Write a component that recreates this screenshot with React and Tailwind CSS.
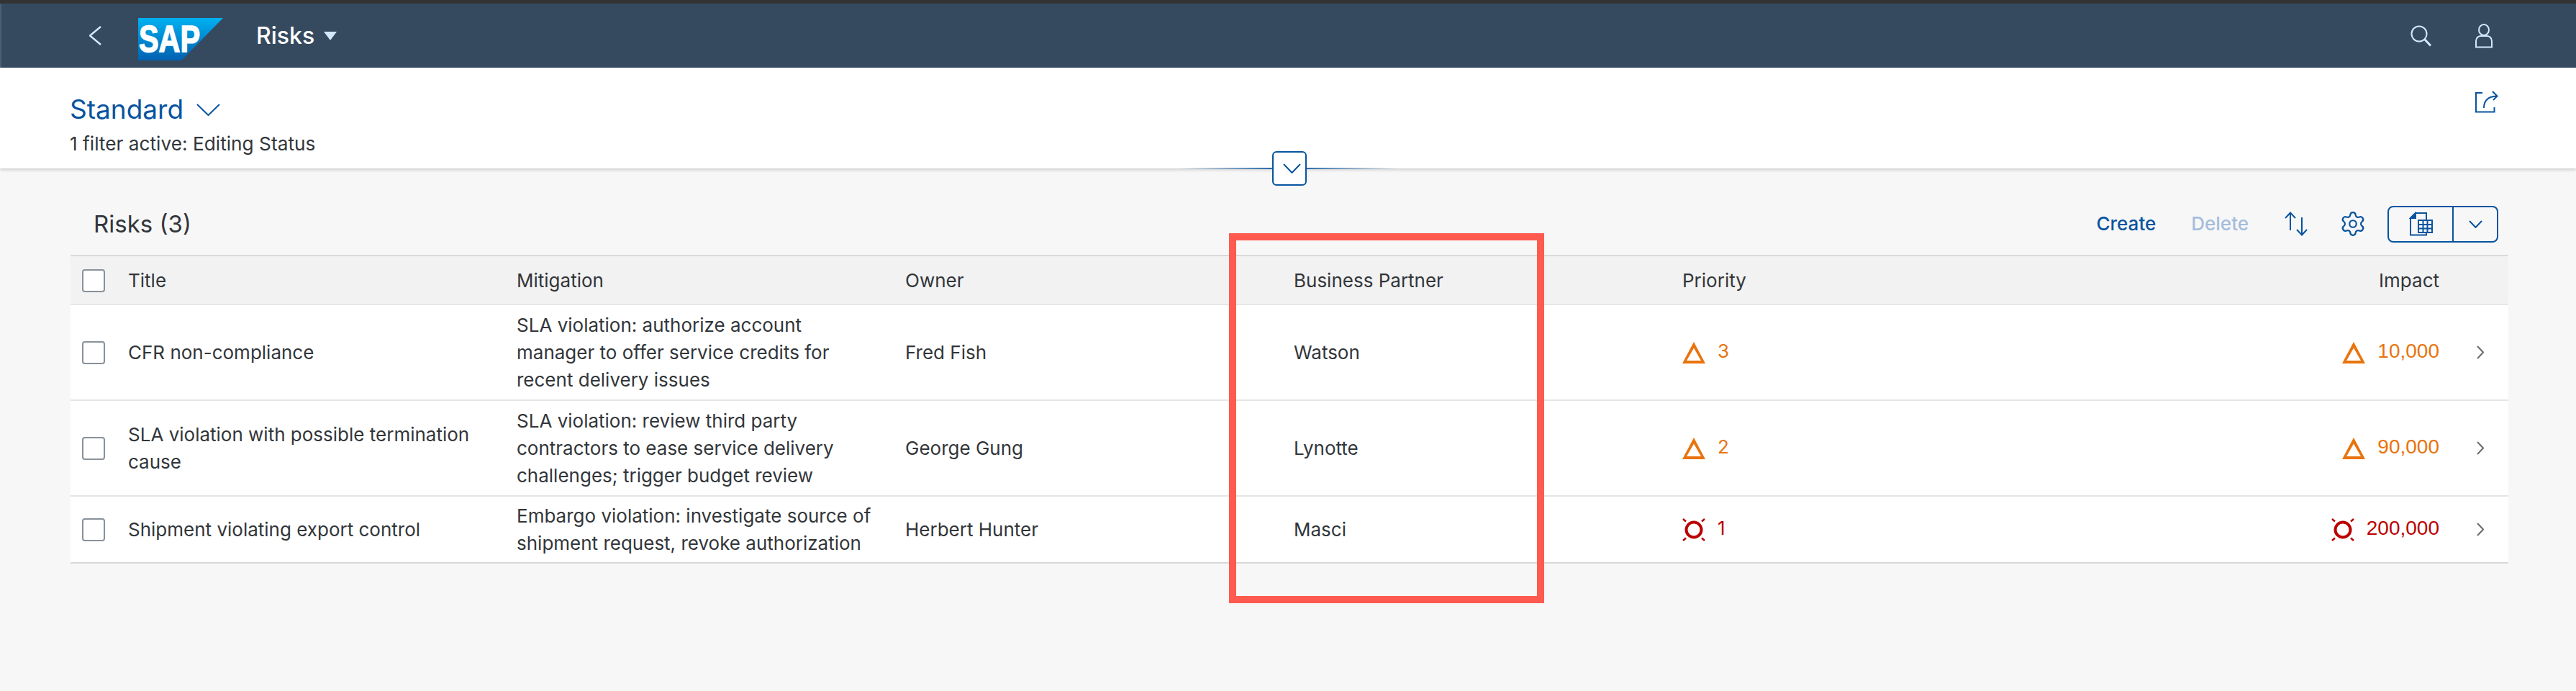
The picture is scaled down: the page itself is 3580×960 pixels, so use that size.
import { Settings } from 'lucide-react';

const rows = [
  {
    title: 'CFR non-compliance',
    mitigation: 'SLA violation: authorize account manager to offer service credits for recent delivery issues',
    owner: 'Fred Fish',
    partner: 'Watson',
    priority: '3',
    impact: '10,000',
    level: 'warning',
    height: 'h-[133px]',
    line: 'border-[#e5e5e5]',
  },
  {
    title: 'SLA violation with possible termination cause',
    mitigation: 'SLA violation: review third party contractors to ease service delivery challenges; trigger budget review',
    owner: 'George Gung',
    partner: 'Lynotte',
    priority: '2',
    impact: '90,000',
    level: 'warning',
    height: 'h-[133px]',
    line: 'border-[#e5e5e5]',
  },
  {
    title: 'Shipment violating export control',
    mitigation: 'Embargo violation: investigate source of shipment request, revoke authorization',
    owner: 'Herbert Hunter',
    partner: 'Masci',
    priority: '1',
    impact: '200,000',
    level: 'error',
    height: 'h-[93px]',
    line: 'border-[#d9d9d9]',
  },
];

const columns = 'grid grid-cols-[80px_540px_540px_540px_540px_526px_1fr_96px] items-center';

function Chevron({ width, height, color, stroke = 2, dir = 'down' }) {
  const points =
    dir === 'down'
      ? `1,1 ${width / 2},${height - 1} ${width - 1},1`
      : dir === 'left'
        ? `${width - 1},1 1,${height / 2} ${width - 1},${height - 1}`
        : `1,1 ${width - 1},${height / 2} 1,${height - 1}`;
  return (
    <svg width={width} height={height} viewBox={`0 0 ${width} ${height}`} fill="none" stroke={color} strokeWidth={stroke} className="shrink-0">
      <polyline points={points} />
    </svg>
  );
}

function SapLogo() {
  return (
    <svg width="118" height="59" viewBox="0 0 118 59" className="shrink-0">
      <defs>
        <linearGradient id="sapBlue" x1="0" y1="0" x2="0" y2="1">
          <stop offset="0" stopColor="#00b1f1" />
          <stop offset="1" stopColor="#0061b1" />
        </linearGradient>
      </defs>
      <polygon points="0,0 118,0 60,59 0,59" fill="url(#sapBlue)" />
      <text
        x="1"
        y="47"
        fill="#fff"
        stroke="#fff"
        strokeWidth="1.6"
        fontFamily="Liberation Sans"
        fontWeight="700"
        fontSize="52"
        textLength="85"
        lengthAdjust="spacingAndGlyphs"
      >
        SAP
      </text>
    </svg>
  );
}

function SearchIcon() {
  return (
    <svg width="30" height="30" viewBox="0 0 30 30" fill="none" stroke="#d1e8ff" strokeWidth="2">
      <circle cx="12" cy="12" r="10.5" />
      <path d="M19.5 19.5 L28 28.5" strokeWidth="3" />
    </svg>
  );
}

function UserIcon() {
  return (
    <svg width="26" height="34" viewBox="0 0 26 34" fill="none" stroke="#d1e8ff" strokeWidth="2">
      <ellipse cx="13" cy="8.5" rx="7" ry="7.5" />
      <path d="M2 32.5 V24 C2 19 6 17 9 17 H17 C20 17 24 19 24 24 V32.5 Z" />
    </svg>
  );
}

function ShareIcon() {
  return (
    <svg width="33" height="32" viewBox="0 0 33 32" fill="none" stroke="#0854a0" strokeWidth="2">
      <path d="M11 4 H2 V30.5 H27.5 V24" />
      <path d="M13 25 C13 15 18 9 31 8.5 M25 2 L31.5 8.5 L26 14" />
    </svg>
  );
}

function SortIcon() {
  return (
    <svg width="32" height="34" viewBox="0 0 32 34" fill="none" stroke="#0854a0" strokeWidth="2">
      <path d="M8 2 V26 M1 9 L8 1.5 L15 9" />
      <path d="M24 8 V32 M17 25 L24 32.5 L31 25" />
    </svg>
  );
}

function ExportIcon() {
  return (
    <svg width="33" height="34" viewBox="0 0 33 34" fill="none" stroke="#0854a0" strokeWidth="2">
      <path d="M24 11 V2 H9 L2 9 V32.5 H24 V29" />
      <path d="M9 2 V9 H2 Z" fill="#0854a0" />
      <rect x="13" y="12" width="19" height="17" fill="#f7f7f7" />
      <path d="M19.5 12 V29 M25.5 12 V29 M13 18 H32 M13 23.5 H32" />
    </svg>
  );
}

function StatusIcon({ level }) {
  if (level === 'warning') {
    return (
      <svg width="32" height="30" viewBox="0 0 32 30" className="shrink-0">
        <path d="M16 0 L32 30 H0 Z M16 8.5 L6 26 H26 Z" fill="#e9730c" fillRule="evenodd" />
      </svg>
    );
  }
  return (
    <svg width="32" height="32" viewBox="0 0 32 32" fill="none" stroke="#bb0000" className="shrink-0">
      <circle cx="16" cy="16" r="10.5" strokeWidth="4" />
      <path d="M1 1 L5 4.5 M31 1 L27 4.5 M1 31 L5 27.5 M31 31 L27 27.5" strokeWidth="2.5" />
    </svg>
  );
}

function CheckBox() {
  return <div className="ml-4 w-8 h-8 rounded-[4px] border-2 border-[#89919a] bg-white" />;
}

export default function App() {
  return (
    <div className="relative w-[3580px] h-[960px] overflow-hidden bg-[#f7f7f7] text-[#32363a] text-[26px] leading-[38px] font-['Inter',sans-serif]">
      <div className="h-[5px] bg-[#333333]" />

      <header className="h-[89px] bg-[#354a5f] border-l-2 border-[#4d5f72] flex items-center pl-[122px] pr-[115px]">
        <Chevron width={17} height={27} color="#d1e8ff" stroke={2.5} dir="left" />
        <div className="ml-[51px] mt-[10px]">
          <SapLogo />
        </div>
        <span className="ml-[46px] text-white font-medium text-[32px]">Risks</span>
        <div className="ml-[13px] w-0 h-0 border-x-[9px] border-x-transparent border-t-[12px] border-t-[#d1e8ff]" />
        <div className="ml-auto flex items-center gap-[59px]">
          <SearchIcon />
          <UserIcon />
        </div>
      </header>

      <section className="relative z-10 h-[140px] bg-white shadow-[0_2px_4px_rgba(0,0,0,0.18)] pl-[97px] pr-[108px] flex justify-between">
        <div>
          <div className="mt-[32px] flex items-center gap-[18px] text-[#0854a0] text-[37px] leading-[52px]">
            Standard
            <Chevron width={33} height={17} color="#0854a0" />
          </div>
          <div className="mt-[3px] text-[26.25px]">1 filter active: Editing Status</div>
        </div>
        <div className="mt-[31px]">
          <ShareIcon />
        </div>
      </section>

      <section className="pl-[98px] pr-[94px]">
        <div className="h-[120px] pt-[34px] pl-[32px] pr-[14px] flex items-center">
          <h2 className="text-[33px] font-normal">Risks (3)</h2>
          <div className="ml-auto flex items-center">
            <span className="text-[#0854a0] font-medium">Create</span>
            <span className="ml-[49px] text-[#a4bcdc] font-medium">Delete</span>
            <div className="ml-[50px]">
              <SortIcon />
            </div>
            <Settings className="ml-[44px]" size={38} strokeWidth={1.4} color="#0854a0" />
            <div className="ml-[29px] w-[154px] h-[51px] rounded-[8px] border-2 border-[#0854a0] flex">
              <div className="w-[90px] border-r-2 border-[#0854a0] flex items-center justify-center">
                <ExportIcon />
              </div>
              <div className="flex-1 flex items-center justify-center">
                <Chevron width={19} height={11} color="#0854a0" />
              </div>
            </div>
          </div>
        </div>

        <div className={`${columns} h-[70px] pt-[2px] bg-[#f2f2f2] border-t-2 border-b-2 border-t-[#d9d9d9] border-b-[#e5e5e5]`}>
          <CheckBox />
          <div>Title</div>
          <div>Mitigation</div>
          <div>Owner</div>
          <div>Business Partner</div>
          <div>Priority</div>
          <div className="text-right">Impact</div>
          <div />
        </div>

        {rows.map((row) => {
          const color = row.level === 'warning' ? 'text-[#e9730c]' : 'text-[#bb0000]';
          return (
            <div key={row.title} className={`${columns} ${row.height} bg-white border-b-2 ${row.line}`}>
              <CheckBox />
              <div className="pr-[44px]">{row.title}</div>
              <div className="pr-[44px]">{row.mitigation}</div>
              <div>{row.owner}</div>
              <div>{row.partner}</div>
              <div className={`flex items-center gap-[17px] ${color}`}>
                <StatusIcon level={row.level} />
                <span className="mb-[4px]">{row.priority}</span>
              </div>
              <div className={`flex items-center justify-end gap-[17px] ${color}`}>
                <StatusIcon level={row.level} />
                <span className="mb-[4px] text-[28px] font-['Liberation_Sans',sans-serif]">{row.impact}</span>
              </div>
              <div className="pl-[52px]">
                <Chevron width={10} height={19} color="#6a6d70" dir="right" />
              </div>
            </div>
          );
        })}
      </section>

      {/* collapse handle on the header edge */}
      <div className="absolute z-20 left-[1640px] top-[233px] w-[300px] h-[2px] bg-gradient-to-r from-transparent via-[#0854a0] to-transparent" />
      <div className="absolute z-20 left-[1768px] top-[210px] w-[48px] h-[48px] rounded-[6px] border-2 border-[#0854a0] bg-white flex items-center justify-center pl-[6px]">
        <Chevron width={25} height={14} color="#0854a0" />
      </div>

      {/* red annotation box */}
      <div className="absolute z-30 left-[1708px] top-[324px] w-[438px] h-[514px] border-[10px] border-[#ff5a4f]" />
    </div>
  );
}
